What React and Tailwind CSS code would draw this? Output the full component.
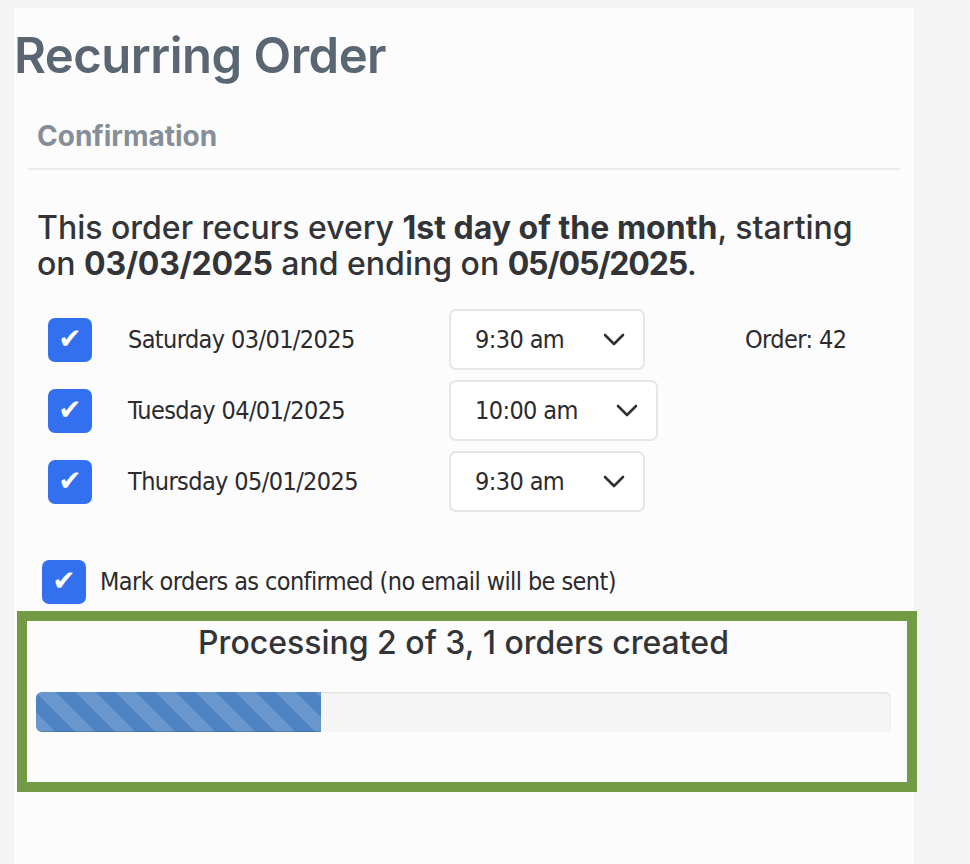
import React from 'react';

const rows = [
  { day: 'Saturday 03/01/2025', time: '9:30 am', wide: false, order: 'Order: 42' },
  { day: 'Tuesday 04/01/2025', time: '10:00 am', wide: true, order: '' },
  { day: 'Thursday 05/01/2025', time: '9:30 am', wide: false, order: '' },
];

const Check = () => (
  <div className="w-[44px] h-[44px] rounded-[7px] bg-[#3370ef] flex items-center justify-center shrink-0">
    <span className="text-white text-[28px] leading-none font-['DejaVu_Sans',sans-serif] -mt-[2px]">✔</span>
  </div>
);

const Chevron = () => (
  <svg width="22" height="13" viewBox="0 0 22 13" fill="none">
    <path d="M2 2l9 9 9-9" stroke="#2f3033" strokeWidth="2.6" strokeLinecap="round" strokeLinejoin="round" />
  </svg>
);

const App = () => {
  return (
    <div className="min-h-[864px] bg-[#f4f4f4] pt-2 pl-[14px] pr-[56px] font-['Inter',sans-serif]">
      <div className="bg-[#fcfcfc] min-h-[856px] w-[900px]">
        <h1 className="text-[49px] font-semibold text-[#5b6673] leading-none pt-[23px] tracking-[-0.5px]">Recurring Order</h1>

        <div className="mx-[14px] mt-[42px] border-b-2 border-[#ebebeb] pb-[18px]">
          <h2 className="pl-[9px] text-[28px] font-bold text-[#868e97] leading-none">Confirmation</h2>
        </div>

        <p className="px-[23px] pt-[40px] text-[32px] font-medium text-[#333438] leading-[36px]">
          This order recurs every <b className="font-bold">1st day of the month</b>, starting on <b className="font-bold tracking-[-0.3px]">03/03/2025</b> and ending on <b className="font-bold tracking-[-1.2px]">05/05/2025</b>.
        </p>

        <div className="mt-[27px] flex flex-col gap-[10px] font-['DejaVu_Sans_Condensed','DejaVu_Sans',sans-serif] text-[#2b2b2e]">
          {rows.map((r) => (
            <div key={r.day} className="flex items-center h-[61px]">
              <div className="pl-[34px] w-[114px]">
                <Check />
              </div>
              <span className="w-[321px] text-[25px] tracking-[-0.6px]">{r.day}</span>
              <div className={`h-[61px] ${r.wide ? 'w-[209px]' : 'w-[196px]'} border-2 border-[#e6e6e6] rounded-[7px] bg-white flex items-center justify-between pl-[24px] pr-[18px]`}>
                <span className="text-[25px] tracking-[-0.6px]">{r.time}</span>
                <Chevron />
              </div>
              <span className="ml-[100px] text-[25px] tracking-[-0.6px]">{r.order}</span>
            </div>
          ))}
        </div>

        <div className="mt-[48px] pl-[28px] flex items-center gap-[14px] font-['DejaVu_Sans_Condensed','DejaVu_Sans',sans-serif] text-[#2b2b2e]">
          <Check />
          <span className="text-[25px] tracking-[-0.6px]">Mark orders as confirmed (no email will be sent)</span>
        </div>

        <div className="mt-[7px] ml-[3px] w-[900px] border-[10px] border-[#739b45] bg-[#fcfcfc] pt-[2px] pb-[50px] pl-[9px] pr-[16px]">
          <p className="text-center text-[32px] font-medium text-[#333438] leading-[40px]">Processing 2 of 3, 1 orders created</p>
          <div className="mt-[29px] h-[40px] rounded-[6px] bg-[#f5f5f5] shadow-[inset_0_1px_2px_rgba(0,0,0,0.1)] overflow-hidden">
            <div
              className="h-full bg-[#4f84c4] bg-[linear-gradient(45deg,rgba(255,255,255,0.15)_25%,transparent_25%,transparent_50%,rgba(255,255,255,0.15)_50%,rgba(255,255,255,0.15)_75%,transparent_75%,transparent)] bg-[length:40px_40px] shadow-[inset_0_-1px_0_rgba(0,0,0,0.15)]"
              style={{ width: '33.3%' }}
            />
          </div>
        </div>
      </div>
    </div>
  );
};

export default App;
